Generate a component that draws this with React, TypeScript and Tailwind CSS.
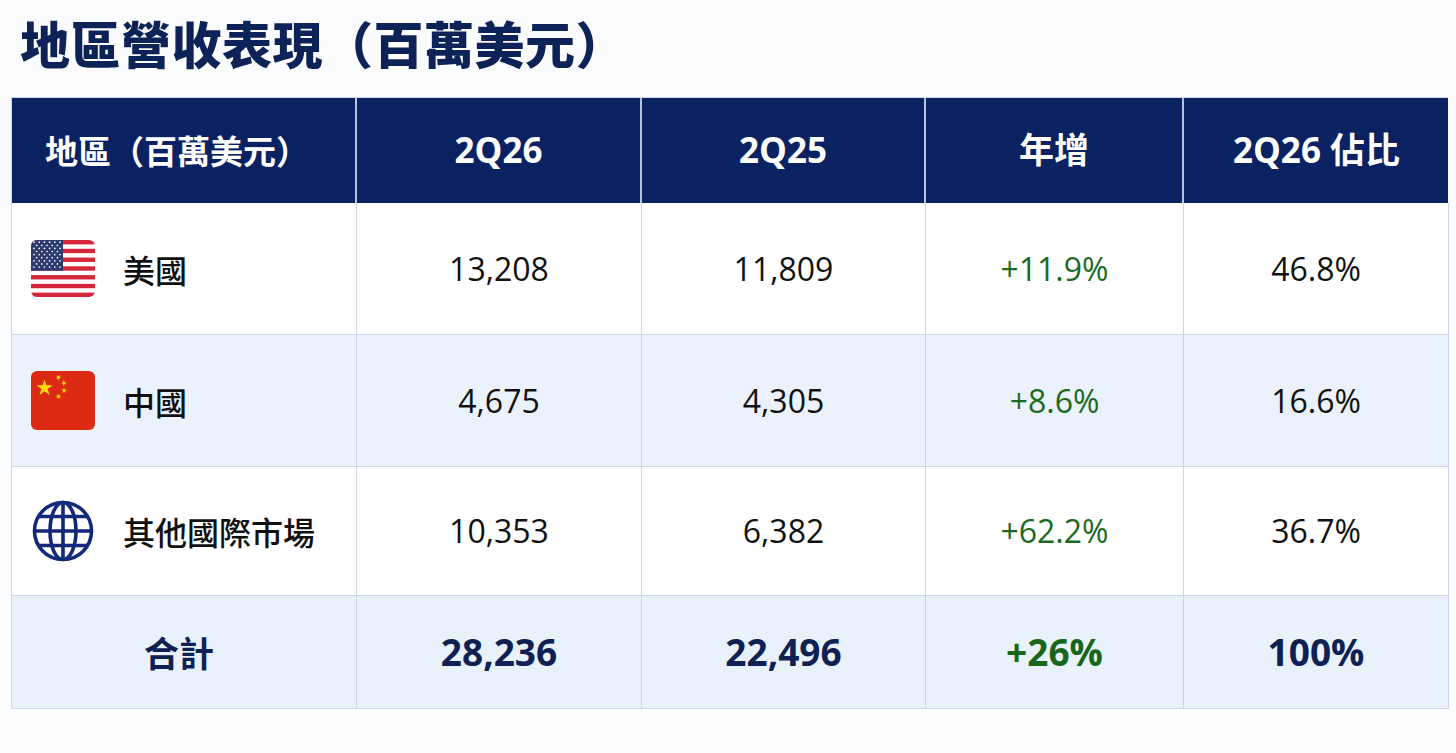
import React from "react";

const latin = "font-['Open_Sans','Noto_Sans_CJK_TC',sans-serif]";
const cjk = "font-['Noto_Sans_CJK_TC','Noto_Sans',sans-serif]";

function USFlag() {
  const w = 64;
  const h = 57;
  const sh = h / 13;
  const cw = 32;
  const ch = sh * 7;
  const stars: React.ReactNode[] = [];
  for (let r = 0; r < 9; r++) {
    const cols = r % 2 === 0 ? 6 : 5;
    for (let c = 0; c < cols; c++) {
      const x = r % 2 === 0 ? 3 + c * 5.2 : 5.6 + c * 5.2;
      const y = 2.2 + r * 3.1;
      stars.push(<circle key={`${r}-${c}`} cx={x} cy={y} r={0.85} fill="#fff" />);
    }
  }
  return (
    <svg width={w} height={h} viewBox={`0 0 ${w} ${h}`}>
      <defs>
        <clipPath id="usclip">
          <rect x="0" y="0" width={w} height={h} rx="6" />
        </clipPath>
      </defs>
      <g clipPath="url(#usclip)">
        <rect width={w} height={h} fill="#fff" />
        {Array.from({ length: 13 }).map((_, i) =>
          i % 2 === 0 ? <rect key={i} x="0" y={i * sh} width={w} height={sh} fill="#d4273a" /> : null
        )}
        <rect x="0" y="0" width={cw} height={ch} fill="#2c3a6e" />
        {stars}
      </g>
    </svg>
  );
}

function star(cx: number, cy: number, R: number, rot = 0) {
  const pts: string[] = [];
  for (let i = 0; i < 10; i++) {
    const r = i % 2 === 0 ? R : R * 0.382;
    const a = -Math.PI / 2 + (i * Math.PI) / 5 + rot;
    pts.push(`${(cx + r * Math.cos(a)).toFixed(2)},${(cy + r * Math.sin(a)).toFixed(2)}`);
  }
  return pts.join(" ");
}

function CNFlag() {
  return (
    <svg width={64} height={59} viewBox="0 0 64 59">
      <rect x="0" y="0" width="64" height="59" rx="6" fill="#dd2a12" />
      <polygon points={star(13.5, 17, 8.5)} fill="#ffde00" />
      <polygon points={star(27.5, 6.5, 3, 0.5)} fill="#ffde00" />
      <polygon points={star(33, 12, 3, 0.9)} fill="#ffde00" />
      <polygon points={star(33, 19.5, 3, 0)} fill="#ffde00" />
      <polygon points={star(27.5, 25.5, 3, 0.4)} fill="#ffde00" />
    </svg>
  );
}

function Globe() {
  return (
    <svg width={64} height={64} viewBox="0 0 64 64" fill="none" stroke="#12287a" strokeWidth="3.6">
      <circle cx="32" cy="32" r="28.5" />
      <ellipse cx="32" cy="32" rx="13" ry="28.5" />
      <line x1="32" y1="3.5" x2="32" y2="60.5" />
      <line x1="3.5" y1="32" x2="60.5" y2="32" />
      <line x1="8" y1="17.5" x2="56" y2="17.5" />
      <line x1="8" y1="46.5" x2="56" y2="46.5" />
    </svg>
  );
}

type Row = {
  icon: React.ReactNode;
  name: string;
  a: string;
  b: string;
  g: string;
  s: string;
  bg: string;
  h: string;
};

const rows: Row[] = [
  { icon: <USFlag />, name: "美國", a: "13,208", b: "11,809", g: "+11.9%", s: "46.8%", bg: "bg-white", h: "h-[132px]" },
  { icon: <CNFlag />, name: "中國", a: "4,675", b: "4,305", g: "+8.6%", s: "16.6%", bg: "bg-[#ebf2fb]", h: "h-[132px]" },
  { icon: <Globe />, name: "其他國際市場", a: "10,353", b: "6,382", g: "+62.2%", s: "36.7%", bg: "bg-white", h: "h-[129px]" },
];

const cellB = "border-r-[1.5px] border-b-[1.5px] border-[#cad6e8]";
const grid = "grid grid-cols-[345px_285px_284px_258px_265px]";

export default function App() {
  return (
    <div className="w-[1456px] h-[753px] bg-[#fbfcfe] pt-[17px] pl-[11px] overflow-hidden">
      <h1 className={`ml-[9px] text-[50px] leading-none font-black text-[#0d2357] tracking-[0.5px] ${cjk}`}>
        地區營收表現（百萬美元）
      </h1>
      <div className="mt-[30px] w-[1437px] border-l-[1.5px] border-t-[1.5px] border-[#cad6e8]">
        <div className={`${grid} h-[105px] bg-[#0a2262] text-white`}>
          <div className={`flex items-center pl-[33px] border-r-2 border-[#b8c4da] text-[33px] font-bold ${cjk}`}>
            地區（百萬美元）
          </div>
          {["2Q26", "2Q25", "年增", "2Q26 佔比"].map((t, i) => (
            <div
              key={t}
              className={`flex items-center justify-center text-[35px] font-bold ${latin} ${i < 3 ? "border-r-2 border-[#b8c4da]" : ""}`}
            >
              {t}
            </div>
          ))}
        </div>
        {rows.map((r) => (
          <div key={r.name} className={`${grid} ${r.h} ${r.bg}`}>
            <div className={`flex items-center ${cellB}`}>
              <div className="w-[64px] ml-[19px] flex items-center justify-center">{r.icon}</div>
              <span className={`ml-[28px] text-[32px] font-medium text-[#111] ${cjk}`}>{r.name}</span>
            </div>
            <div className={`flex items-center justify-center text-[32px] text-[#111] ${latin} ${cellB}`}>{r.a}</div>
            <div className={`flex items-center justify-center text-[32px] text-[#111] ${latin} ${cellB}`}>{r.b}</div>
            <div className={`flex items-center justify-center text-[32px] text-[#1b6a1f] ${latin} ${cellB}`}>{r.g}</div>
            <div className={`flex items-center justify-center text-[32px] text-[#111] ${latin} ${cellB}`}>{r.s}</div>
          </div>
        ))}
        <div className={`${grid} h-[113px] bg-[#e9f1fb]`}>
          <div className={`flex items-center justify-center pr-[10px] text-[35px] font-bold text-[#0f2152] ${cjk} ${cellB}`}>
            合計
          </div>
          <div className={`flex items-center justify-center text-[37px] font-bold text-[#0f2152] ${latin} ${cellB}`}>
            28,236
          </div>
          <div className={`flex items-center justify-center text-[37px] font-bold text-[#0f2152] ${latin} ${cellB}`}>
            22,496
          </div>
          <div className={`flex items-center justify-center text-[37px] font-bold text-[#17661c] ${latin} ${cellB}`}>
            +26%
          </div>
          <div className={`flex items-center justify-center text-[37px] font-bold text-[#0f2152] ${latin} ${cellB}`}>
            100%
          </div>
        </div>
      </div>
    </div>
  );
}
